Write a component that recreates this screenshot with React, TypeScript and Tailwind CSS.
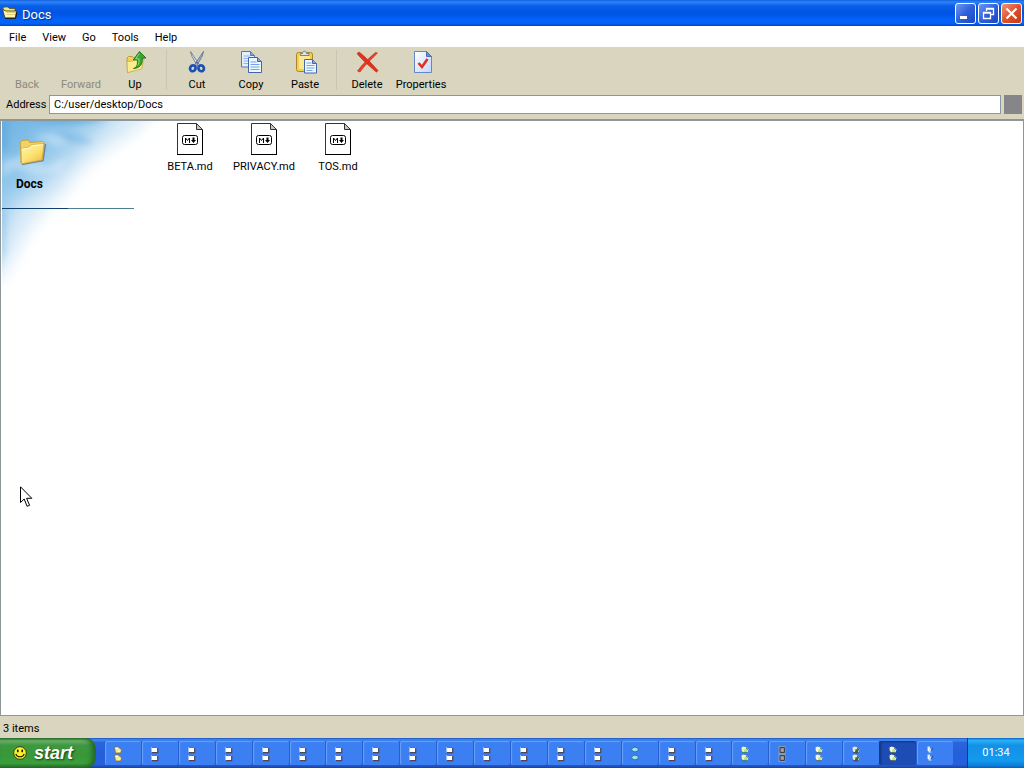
import { useState } from "react";
import type { ReactNode } from "react";
import clsx from "clsx";

type TaskKind = "folder" | "page" | "teal" | "green" | "gray" | "photo" | "dark" | "bolt";

const MENUS = ["File", "View", "Go", "Tools", "Help"];
const FILES = ["BETA.md", "PRIVACY.md", "TOS.md"];

const TASKS: TaskKind[] = [
  "folder", "page", "page", "page", "page", "page", "page", "page",
  "page", "page", "page", "page", "page", "page", "teal", "page",
  "page", "green", "gray", "photo", "dark", "photo", "bolt",
];
const ACTIVE_TASK = 21;

// ---------- Icons ----------
function TitleFolderIcon() {
  return (
    <svg width="16" height="16" viewBox="0 0 16 16" aria-hidden="true">
      <path d="M1 3.500 2 2h4l1.500 1.500H13V7H3Z" fill="#f3e68f" stroke="#5b511f" strokeWidth=".8" />
      <path d="M.5 4.500 4 6h10.500l-1 7H3Z" fill="#fdf6b5" stroke="#4a421d" strokeWidth=".9" />
      <path d="M4.500 7.500h9M4.500 9.500h8.500" stroke="#d8c66c" strokeWidth=".8" />
      <path d="M3 13.300h10.700l1-6" fill="none" stroke="#1d1a0c" strokeWidth="1" />
    </svg>
  );
}

function FolderIcon() {
  return (
    <svg width="32" height="32" viewBox="0 0 32 32" aria-hidden="true">
      <defs>
        <linearGradient id="folderFace" x1="0" y1="0" x2=".8" y2="1">
          <stop offset="0" stopColor="#fff7b0" />
          <stop offset=".6" stopColor="#fbe16f" />
          <stop offset="1" stopColor="#eebd3f" />
        </linearGradient>
      </defs>
      <path d="M6 28.500 27 24.500 29.500 8" fill="none" stroke="#5a6a78" strokeOpacity=".7" strokeWidth="1.500" />
      <path d="M4.500 6.500 6 4.500l6-.5 1.800 2.500L27 5.500l1.300 1.500-2 16L5 27.500Z" fill="#f4d262" stroke="#c39a31" strokeWidth=".8" />
      <path d="M5 12.500 13.500 11l2-2.500 12.500-.800-2 16.300L5.500 27.800Z" fill="url(#folderFace)" stroke="#d1a53a" strokeWidth=".8" />
      <path d="M5.800 13.200 14 11.800l2-2.300 11-.800" fill="none" stroke="#fffce0" strokeWidth=".9" />
    </svg>
  );
}

function UpIcon() {
  return (
    <svg width="24" height="24" viewBox="0 0 24 24" aria-hidden="true">
      <path d="M4 8 5.500 6.500h4L11 8l9-1-1.500 11L4.500 22.500Z" fill="#f2d35c" stroke="#b58d24" strokeWidth=".8" />
      <path d="M4 11.500 9.500 11l2-1.500 9.500-1L18.500 19 4.500 22.500Z" fill="#fdeb8d" stroke="#d0a738" strokeWidth=".7" />
      <path d="M10.500 18.500c3.200-1 4.200-3.500 3.900-8.500h-4.200L16.500 1.500 23 8h-3.700c.5 6.500-2.300 10-8.800 10.500Z" fill="#36a832" stroke="#16701b" strokeWidth=".9" />
      <path d="m16.300 3.500-3.700 5.300h3.300c.4 3-.1 5-1.300 6.700" fill="none" stroke="#9de27e" strokeWidth=".9" />
    </svg>
  );
}

function CutIcon() {
  return (
    <svg width="24" height="24" viewBox="0 0 24 24" aria-hidden="true">
      <path d="M5.500 1.500 14.500 15l-2 1L7 6.500Z" fill="#dfe6f2" stroke="#5c6d8d" strokeWidth=".8" />
      <path d="M18.500 1.500 9.500 15l2 1L17 6.500Z" fill="#a9b8d1" stroke="#54658a" strokeWidth=".8" />
      <circle cx="12" cy="12.800" r=".8" fill="#35476f" />
      <ellipse cx="7.800" cy="18.300" rx="2.700" ry="3" transform="rotate(28 7.800 18.300)" fill="none" stroke="#1c4fb4" strokeWidth="2.700" />
      <ellipse cx="16.200" cy="18.300" rx="2.700" ry="3" transform="rotate(-28 16.200 18.300)" fill="none" stroke="#1c4fb4" strokeWidth="2.700" />
    </svg>
  );
}

function CopyIcon() {
  return (
    <svg width="24" height="24" viewBox="0 0 24 24" aria-hidden="true">
      <path d="M2.500 1.500h9l4 4v11.500h-13Z" fill="#e4effd" stroke="#5479b9" />
      <path d="M11.500 1.500v4h4" fill="#7fa5e1" stroke="#5479b9" />
      <path d="M4.500 6h6M4.500 8.500h8M4.500 11h8M4.500 13.500h8" stroke="#8fb4e8" />
      <path d="M9.500 7.500h9l4 4v11h-13Z" fill="#f0f7ff" stroke="#3f65ab" />
      <path d="M18.500 7.500v4h4" fill="#7fa5e1" stroke="#3f65ab" />
      <path d="M11.500 12h6M11.500 14.500h9M11.500 17h9M11.500 19.500h9" stroke="#74a4e4" />
    </svg>
  );
}

function PasteIcon() {
  return (
    <svg width="24" height="24" viewBox="0 0 24 24" aria-hidden="true">
      <rect x="3.500" y="2.500" width="16" height="19" rx="2" fill="#f2cf4c" stroke="#a9862b" />
      <path d="M6 6h11v13H6Z" fill="#fbe892" />
      <path d="M7.500 5.500V3.500H9.500c0-3 4-3 4 0H16v2Z" fill="#dfe3ea" stroke="#737880" strokeWidth=".9" />
      <path d="M11.500 9.500h8l4 4v9.500h-12Z" fill="#eff6ff" stroke="#4567a6" />
      <path d="M19.500 9.500v4h4" fill="#84a8e2" stroke="#4567a6" />
      <path d="M13.500 13h5M13.500 15.500h8M13.500 18h8M13.500 20.500h6" stroke="#74a4e4" />
    </svg>
  );
}

function DeleteIcon() {
  return (
    <svg width="24" height="24" viewBox="0 0 24 24" aria-hidden="true">
      <path d="M2 3.500 4 2c4 2.500 12.500 11 19 18.500l-1.500 1.800C15 16.500 7 10 2 3.500Z" fill="#e5301a" stroke="#ab1d0c" strokeWidth=".5" />
      <path d="M20.500 2.500 22.500 3C17 8.500 9.500 15.500 5 22l-2.500-1C7.500 14 14.500 7.500 20.500 2.500Z" fill="#ee3d22" stroke="#ab1d0c" strokeWidth=".5" />
    </svg>
  );
}

function PropertiesIcon() {
  return (
    <svg width="24" height="24" viewBox="0 0 24 24" aria-hidden="true">
      <defs>
        <linearGradient id="sheet" x1="0" y1="0" x2="1" y2="1">
          <stop offset="0" stopColor="#ffffff" />
          <stop offset="1" stopColor="#bfd7fb" />
        </linearGradient>
      </defs>
      <path d="M5.500 1.500h12l5 5v16h-17Z" fill="url(#sheet)" stroke="#6587c5" />
      <path d="M17.500 1.500v5h5Z" fill="#5f8de0" stroke="#4c70b6" />
      <path d="m9.500 13 3.500 4 5.500-8" fill="none" stroke="#e0301c" strokeWidth="2.600" />
    </svg>
  );
}

function MarkdownIcon() {
  return (
    <svg width="32" height="32" viewBox="0 0 32 32" aria-hidden="true">
      <path d="M3.500.5h19l6 6v25h-25Z" fill="#fff" stroke="#333" />
      <path d="M22.500.5v6h6Z" fill="#c8c8c8" stroke="#333" />
      <path d="M3 31.500h26M28.500 7v24" stroke="#000" />
      <rect x="8.500" y="12.500" width="15" height="9" rx="2" fill="#fff" stroke="#000" />
      <path d="M11.500 20v-5l2 2.500 2-2.500v5" fill="none" stroke="#000" />
      <path d="M18.500 14.500h2V17H22l-2.500 3L17 17h1.500Z" fill="#000" />
    </svg>
  );
}

// Squashed copies of the window icon, one above the other
const TASK_COLORS: Record<TaskKind, [string, string, string]> = {
  folder: ["#f9e38a", "#ffffff", "#8a6a28"],
  page: ["#ffffff", "#f2f2f8", "#4c4557"],
  teal: ["#8fe0e2", "#c9d9f2", "#2c5b87"],
  green: ["#eef6c0", "#a5e07c", "#2f6b52"],
  gray: ["#7fa0b8", "#8b8f9b", "#39414e"],
  photo: ["#f8f6dc", "#b5e88a", "#4d5a50"],
  dark: ["#ece8da", "#2f6f35", "#262c33"],
  bolt: ["#c6ecff", "#ffffff", "#2c4f99"],
};

function TaskIcon({ kind }: { kind: TaskKind }) {
  const [main, accent, edge] = TASK_COLORS[kind];
  return (
    <svg width="8" height="16" viewBox="0 0 8 16" className="shrink-0" aria-hidden="true">
      {[0, 8].map((y) => (
        <g key={y} transform={`translate(0 ${y})`}>
          {kind === "page" && (
            <>
              <path d="M.5 1h6v5.500h-6Z" fill={main} />
              <path d="M6.700 1.500v5.200H.800" fill="none" stroke={edge} strokeWidth="1.200" />
              <path d="M1 1.500h5" stroke="#7d6672" strokeWidth="1" />
            </>
          )}
          {kind === "folder" && (
            <>
              <path d="M.5 1h4l1 1.200 2 1.300-.8 3.500H1.500Z" fill={main} stroke={edge} strokeWidth=".7" />
              <path d="M1.500 2.300h2.500M3.500 5h3" stroke={accent} strokeWidth="1.200" />
            </>
          )}
          {kind === "teal" && (
            <>
              <ellipse cx="4" cy="3.500" rx="3.300" ry="2.400" fill={main} stroke={edge} strokeWidth=".8" />
              <path d="M2.500 3.300h3" stroke={accent} />
            </>
          )}
          {kind === "gray" && (
            <>
              <path d="M.5 0h7v8h-7Z" fill={main} />
              <path d="M2 1.500h4.500v5H2Z" fill={accent} stroke={edge} strokeWidth="1" />
              <path d="M3.500 3.500h1.500v1.500H3.500Z" fill="#d7a5a5" />
            </>
          )}
          {(kind === "green" || kind === "photo" || kind === "dark") && (
            <>
              <path d="M.5 1.500 2.500.500l3 1 2 2-1 3H2L.8 4.500Z" fill={main} />
              <path d="M3.500 3.200h3.500L6 6H3Z" fill={accent} />
              <path d="M1.500 6.700h5M5 2l2 1.500" stroke={edge} strokeWidth=".9" />
            </>
          )}
          {kind === "bolt" && (
            <>
              <path d="M1.500 .5h2.500v2h1.500v4H2.500V5h-1Z" fill={main} />
              <path d="m7 2-2.200 3.500" stroke={edge} strokeWidth="1.100" />
              <path d="M2.500 2v3" stroke={accent} strokeWidth=".8" />
            </>
          )}
        </g>
      ))}
    </svg>
  );
}

function SmileyIcon() {
  return (
    <svg width="14" height="14" viewBox="0 0 14 14" aria-hidden="true">
      <circle cx="7" cy="7" r="6.300" fill="#fbf32b" stroke="#26330b" strokeWidth=".9" />
      <ellipse cx="4.800" cy="5" rx=".9" ry="1.400" fill="#161400" />
      <ellipse cx="9.200" cy="5" rx=".9" ry="1.400" fill="#161400" />
      <path d="M2.800 7.800c1.300 4 7.100 4 8.400 0" fill="none" stroke="#161400" strokeWidth="1.100" />
    </svg>
  );
}

function SkyBackdrop() {
  return (
    <svg className="absolute left-0 top-0" width="160" height="180" viewBox="0 0 160 180" aria-hidden="true">
      <defs>
        <linearGradient id="sky" gradientUnits="userSpaceOnUse" x1="0" y1="0" x2="76" y2="80">
          <stop offset="0" stopColor="#6db2e2" />
          <stop offset=".45" stopColor="#8fc6ea" />
          <stop offset=".75" stopColor="#c3e0f4" />
          <stop offset="1" stopColor="#f0f8fd" />
        </linearGradient>
        <filter id="soft" x="-30%" y="-30%" width="160%" height="160%">
          <feGaussianBlur stdDeviation="8" />
        </filter>
        <filter id="wisp" x="-30%" y="-50%" width="160%" height="200%">
          <feGaussianBlur stdDeviation="3" />
        </filter>
      </defs>
      <g filter="url(#soft)">
        <path d="M-30-30H168L136 8 106 28 80 48 64 70 42 90 26 110 14 132-2 160-30 154Z" fill="#d9ebf8" />
        <path d="M-30-30H130L104 8 80 30 64 48 44 68 14 86 4 120-30 140Z" fill="url(#sky)" />
      </g>
      <g filter="url(#wisp)">
        <path d="M14-6C40 2 64 8 104-2L80-10H20Z" fill="#5aa6dc" opacity=".65" />
        <path d="M56 12c16-2 26 4 36 10-18 2-26 0-36-10Z" fill="#6fb1e0" opacity=".5" />
        <path d="M-4 0h10v30H-4Z" fill="#4f9ad4" opacity=".35" />
        <path d="M0 40 24 33 44 46 66 36 58 50 34 54 14 48 0 56Z" fill="#e3f2fc" opacity=".4" />
        <path d="M30 15 50 12 66 22 54 25Z" fill="#eef8ff" opacity=".35" />
        <path d="M-4 90h8v40l-8 20Z" fill="#7fb9e4" opacity=".4" />
      </g>
    </svg>
  );
}

function Pointer() {
  return (
    <svg className="pointer-events-none absolute left-5 top-[486px]" width="13" height="22" viewBox="0 0 13 22" aria-hidden="true">
      <path d="M.5.800v15.700l3.700-3.500 2.900 7.300 2.500-1-3-7h5.200Z" fill="#fff" stroke="#000" />
    </svg>
  );
}

// ---------- Pieces ----------
function ToolButton({ label, disabled, children }: { label: string; disabled?: boolean; children?: ReactNode }) {
  return (
    <button
      type="button"
      disabled={disabled}
      className="flex h-[43px] w-[54px] flex-col items-center justify-between text-black disabled:text-[#8d8a7c]"
    >
      <span className="flex h-6 items-center justify-center">{children}</span>
      <span className="leading-4">{label}</span>
    </button>
  );
}

function Separator() {
  return (
    <div className="flex w-2 justify-center self-stretch pb-1">
      <div className="w-px bg-[#cbc5b3]" />
    </div>
  );
}

function WindowButton({ label, close, children }: { label: string; close?: boolean; children: ReactNode }) {
  return (
    <button
      type="button"
      aria-label={label}
      className={clsx(
        "flex size-[21px] items-center justify-center rounded-[3px] border border-white",
        close
          ? "bg-linear-to-br from-[#ee9478] via-[#dd512c] to-[#c23a12]"
          : "bg-linear-to-br from-[#6f97f1] via-[#2f60dc] to-[#1b47c4]"
      )}
    >
      <svg width="19" height="19" viewBox="0 0 19 19" fill="none" stroke="#fff" aria-hidden="true">
        {children}
      </svg>
    </button>
  );
}

export default function App() {
  const [address, setAddress] = useState("C:/user/desktop/Docs");

  return (
    <div className="relative flex h-screen flex-col overflow-hidden bg-[#d9d5be] font-[Roboto,'Liberation_Sans',sans-serif] text-[11px] text-black">
      {/* Title bar */}
      <header className="flex h-[26px] shrink-0 items-center gap-1 bg-[linear-gradient(#1560dd_0,#2b85fa_8%,#0a5fe8_22%,#0054e3_50%,#0263fb_78%,#0262f6_90%,#0045c4_100%)] px-0.5">
        <TitleFolderIcon />
        <h1 className="flex-1 pt-1 text-[13px] leading-4 text-white [text-shadow:1px_1px_1px_#0a2f80]">Docs</h1>
        <div className="flex gap-0.5">
          <WindowButton label="Minimize">
            <path d="M4 13.500h7" strokeWidth="3" />
          </WindowButton>
          <WindowButton label="Restore">
            <path d="M7.500 7V4.500h7v6H12M7 5h8" strokeWidth="1.300" />
            <path d="M4.500 8.500h7v6h-7ZM4 9h8" strokeWidth="1.300" />
          </WindowButton>
          <WindowButton label="Close" close>
            <path d="m4.500 4.500 10 10M14.500 4.500l-10 10" strokeWidth="2.200" />
          </WindowButton>
        </div>
      </header>

      {/* Menu bar */}
      <nav className="flex h-[21px] shrink-0 items-center bg-white pl-px pt-0.5">
        {MENUS.map((m) => (
          <button key={m} type="button" className="px-2 leading-4">
            {m}
          </button>
        ))}
      </nav>

      {/* Toolbar */}
      <div className="flex h-[47px] shrink-0 items-start pt-[3px]">
        <ToolButton label="Back" disabled />
        <ToolButton label="Forward" disabled />
        <ToolButton label="Up"><UpIcon /></ToolButton>
        <Separator />
        <ToolButton label="Cut"><CutIcon /></ToolButton>
        <ToolButton label="Copy"><CopyIcon /></ToolButton>
        <ToolButton label="Paste"><PasteIcon /></ToolButton>
        <Separator />
        <ToolButton label="Delete"><DeleteIcon /></ToolButton>
        <ToolButton label="Properties"><PropertiesIcon /></ToolButton>
      </div>

      {/* Address bar */}
      <div className="flex h-[25px] shrink-0 items-start gap-[3px] pl-1.5 pr-0.5 pt-px">
        <label htmlFor="address" className="w-10 leading-[19px]">Address</label>
        <input
          id="address"
          value={address}
          onChange={(e) => setAddress(e.target.value)}
          className="h-[19px] min-w-0 flex-1 border border-[#8996a5] bg-white px-1 outline-none"
        />
        <button type="button" aria-label="Go to address" className="h-[19px] w-[18px] bg-[#86868a]" />
      </div>

      {/* Folder view */}
      <main className="flex min-h-0 flex-1 border border-t-2 border-[#8f9699] bg-white pl-px">
        <aside className="relative w-[151px] shrink-0">
          <SkyBackdrop />
          <div className="relative pl-3.5 pt-[15px]">
            <FolderIcon />
            <h2 className="mt-2 text-xs font-bold leading-4">Docs</h2>
          </div>
          <div className="relative mt-4 h-px w-[132px] bg-linear-to-r from-[#12406f] from-50% to-[#4d7f96] to-50%" />
        </aside>
        <ul className="flex min-w-0 flex-1 flex-wrap content-start pt-0.5">
          {FILES.map((f) => (
            <li key={f}>
              <button type="button" className="flex w-[74px] flex-col items-center gap-1">
                <MarkdownIcon />
                <span className="leading-4">{f}</span>
              </button>
            </li>
          ))}
        </ul>
      </main>

      {/* Status bar */}
      <footer className="flex h-[22px] shrink-0 items-center px-[3px] pt-1">3 items</footer>

      {/* Taskbar */}
      <div className="flex h-[30px] shrink-0 bg-[linear-gradient(#1c4fb8_0,#3f8cf3_6%,#2b63dc_16%,#245edb_50%,#2660dd_88%,#1941a5_100%)]">
        <button
          type="button"
          className="flex w-24 items-center gap-[7px] rounded-r-[10px] bg-[linear-gradient(#2c6e2d_0,#6fb56c_9%,#3f973f_24%,#379837_60%,#3c9f3b_85%,#23692a_100%)] pl-[13px] font-['Liberation_Sans',Arial,sans-serif] text-lg font-bold italic leading-6 text-white shadow-[inset_-4px_0_5px_#23692a] [text-shadow:1px_1px_2px_#1c3a16]"
        >
          <SmileyIcon />
          start
        </button>
        <div className="flex min-w-0 flex-1 pb-[3px] pl-2 pr-3.5 pt-[3px]">
          {TASKS.map((kind, i) => (
            <button
              key={i}
              type="button"
              aria-label={`Window ${i + 1}`}
              className={clsx(
                "flex min-w-0 flex-1 items-center rounded-xs border-l pl-[9px] pt-0.5",
                i === ACTIVE_TASK
                  ? "border-[#143a94] bg-[#1d4cb4] shadow-[inset_1px_1px_2px_#123484]"
                  : "border-[#265fce] bg-[#3b7ff2] shadow-[inset_1px_1px_1px_#6aa2fa]"
              )}
            >
              <TaskIcon kind={kind} />
            </button>
          ))}
        </div>
        <time className="flex w-[57px] items-center justify-center border-l border-[#0d3a9a] bg-[linear-gradient(#0b67c9_0,#2bb0f5_8%,#1290e8_25%,#139aee_75%,#0d7ed6_92%,#095bc9_100%)] text-white">
          01:34
        </time>
      </div>

      <Pointer />
    </div>
  );
}
